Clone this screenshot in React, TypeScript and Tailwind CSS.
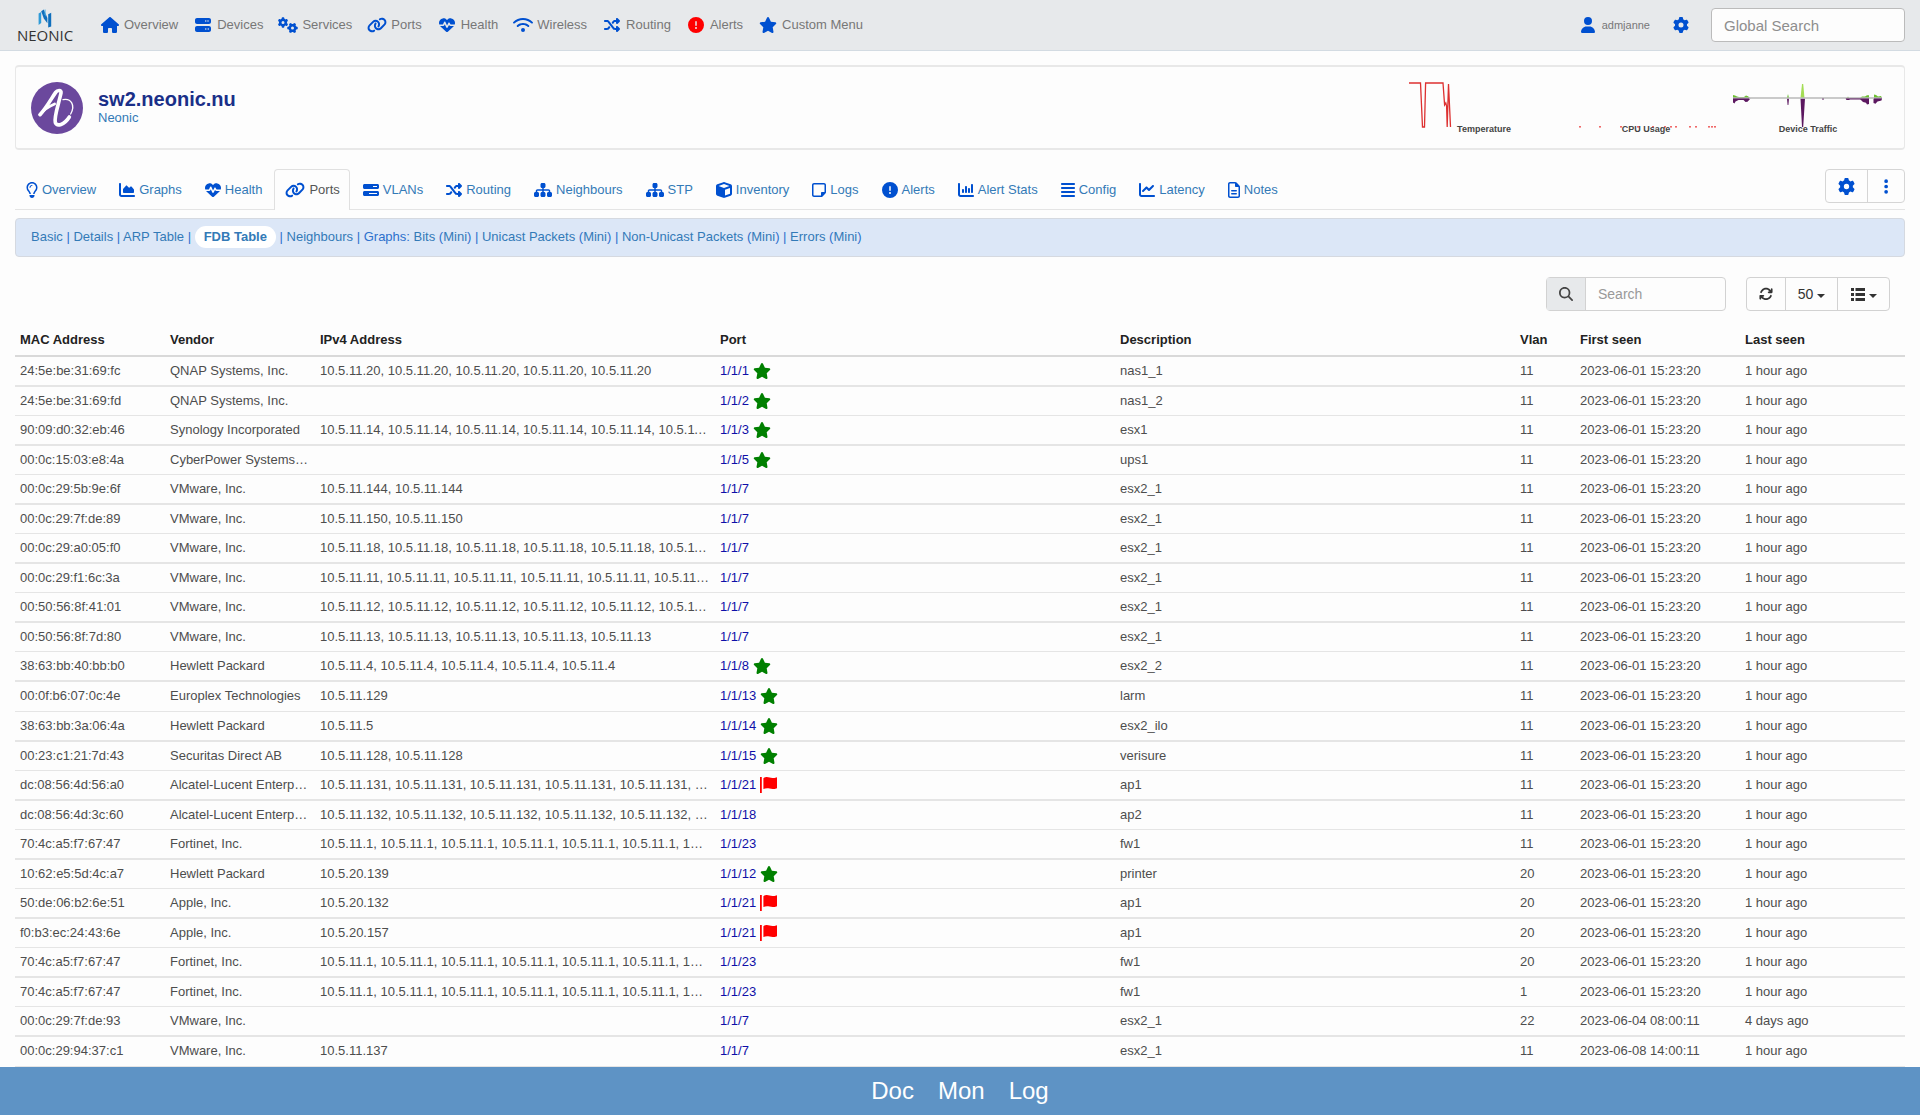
import type { IconType } from "react-icons";
import {
  FaAlignJustify,
  FaArrowsRotate,
  FaBarsProgress,
  FaChartArea,
  FaChartColumn,
  FaChartLine,
  FaCircleExclamation,
  FaCube,
  FaEllipsisVertical,
  FaGear,
  FaGears,
  FaHeartPulse,
  FaHouse,
  FaLink,
  FaMagnifyingGlass,
  FaRegFileLines,
  FaRegLightbulb,
  FaRegNoteSticky,
  FaServer,
  FaShuffle,
  FaSitemap,
  FaStar,
  FaUser,
  FaWifi,
} from "react-icons/fa6";

interface MenuItem {
  label: string;
  icon: IconType;
  color?: string;
}

const mainMenu: MenuItem[] = [
  { label: "Overview", icon: FaHouse },
  { label: "Devices", icon: FaServer },
  { label: "Services", icon: FaGears },
  { label: "Ports", icon: FaLink },
  { label: "Health", icon: FaHeartPulse },
  { label: "Wireless", icon: FaWifi },
  { label: "Routing", icon: FaShuffle },
  { label: "Alerts", icon: FaCircleExclamation, color: "text-[#ff0000]" },
  { label: "Custom Menu", icon: FaStar },
];

const deviceTabs: MenuItem[] = [
  { label: "Overview", icon: FaRegLightbulb },
  { label: "Graphs", icon: FaChartArea },
  { label: "Health", icon: FaHeartPulse },
  { label: "Ports", icon: FaLink },
  { label: "VLANs", icon: FaBarsProgress },
  { label: "Routing", icon: FaShuffle },
  { label: "Neighbours", icon: FaSitemap },
  { label: "STP", icon: FaSitemap },
  { label: "Inventory", icon: FaCube },
  { label: "Logs", icon: FaRegNoteSticky },
  { label: "Alerts", icon: FaCircleExclamation },
  { label: "Alert Stats", icon: FaChartColumn },
  { label: "Config", icon: FaAlignJustify },
  { label: "Latency", icon: FaChartLine },
  { label: "Notes", icon: FaRegFileLines },
];

type Mark = "star" | "flag" | "";

interface FdbEntry {
  mac: string;
  vendor: string;
  ips: string;
  port: string;
  mark: Mark;
  description: string;
  vlan: number;
  first: string;
  last: string;
}

const repeat = (ip: string, times: number) => Array(times).fill(ip).join(", ");

const row = (
  mac: string,
  vendor: string,
  ips: string,
  port: string,
  mark: Mark,
  description: string,
  vlan = 11,
  first = "2023-06-01 15:23:20",
  last = "1 hour ago",
): FdbEntry => ({ mac, vendor, ips, port, mark, description, vlan, first, last });

const entries: FdbEntry[] = [
  row("24:5e:be:31:69:fc", "QNAP Systems, Inc.", repeat("10.5.11.20", 5), "1/1/1", "star", "nas1_1"),
  row("24:5e:be:31:69:fd", "QNAP Systems, Inc.", "", "1/1/2", "star", "nas1_2"),
  row("90:09:d0:32:eb:46", "Synology Incorporated", repeat("10.5.11.14", 6), "1/1/3", "star", "esx1"),
  row("00:0c:15:03:e8:4a", "CyberPower Systems Inc.", "", "1/1/5", "star", "ups1"),
  row("00:0c:29:5b:9e:6f", "VMware, Inc.", repeat("10.5.11.144", 2), "1/1/7", "", "esx2_1"),
  row("00:0c:29:7f:de:89", "VMware, Inc.", repeat("10.5.11.150", 2), "1/1/7", "", "esx2_1"),
  row("00:0c:29:a0:05:f0", "VMware, Inc.", repeat("10.5.11.18", 6), "1/1/7", "", "esx2_1"),
  row("00:0c:29:f1:6c:3a", "VMware, Inc.", repeat("10.5.11.11", 7), "1/1/7", "", "esx2_1"),
  row("00:50:56:8f:41:01", "VMware, Inc.", repeat("10.5.11.12", 6), "1/1/7", "", "esx2_1"),
  row("00:50:56:8f:7d:80", "VMware, Inc.", repeat("10.5.11.13", 5), "1/1/7", "", "esx2_1"),
  row("38:63:bb:40:bb:b0", "Hewlett Packard", repeat("10.5.11.4", 5), "1/1/8", "star", "esx2_2"),
  row("00:0f:b6:07:0c:4e", "Europlex Technologies", "10.5.11.129", "1/1/13", "star", "larm"),
  row("38:63:bb:3a:06:4a", "Hewlett Packard", "10.5.11.5", "1/1/14", "star", "esx2_ilo"),
  row("00:23:c1:21:7d:43", "Securitas Direct AB", repeat("10.5.11.128", 2), "1/1/15", "star", "verisure"),
  row("dc:08:56:4d:56:a0", "Alcatel-Lucent Enterprise", repeat("10.5.11.131", 6), "1/1/21", "flag", "ap1"),
  row("dc:08:56:4d:3c:60", "Alcatel-Lucent Enterprise", repeat("10.5.11.132", 6), "1/1/18", "", "ap2"),
  row("70:4c:a5:f7:67:47", "Fortinet, Inc.", repeat("10.5.11.1", 7), "1/1/23", "", "fw1"),
  row("10:62:e5:5d:4c:a7", "Hewlett Packard", "10.5.20.139", "1/1/12", "star", "printer", 20),
  row("50:de:06:b2:6e:51", "Apple, Inc.", "10.5.20.132", "1/1/21", "flag", "ap1", 20),
  row("f0:b3:ec:24:43:6e", "Apple, Inc.", "10.5.20.157", "1/1/21", "flag", "ap1", 20),
  row("70:4c:a5:f7:67:47", "Fortinet, Inc.", repeat("10.5.11.1", 7), "1/1/23", "", "fw1", 20),
  row("70:4c:a5:f7:67:47", "Fortinet, Inc.", repeat("10.5.11.1", 7), "1/1/23", "", "fw1", 1),
  row("00:0c:29:7f:de:93", "VMware, Inc.", "", "1/1/7", "", "esx2_1", 22, "2023-06-04 08:00:11", "4 days ago"),
  row("00:0c:29:94:37:c1", "VMware, Inc.", "10.5.11.137", "1/1/7", "", "esx2_1", 11, "2023-06-08 14:00:11"),
];

function BrandMark() {
  return (
    <svg viewBox="0 0 14 19" className="h-[19px] w-[14px]" aria-hidden="true">
      <path d="M0.6 4.5 3.2 3v11l-2.6 2z" fill="#2f9bd8" />
      <path d="M3.2 2.2 5.8 0.6 9.4 9v5.2L5.8 9.4z" fill="#0f6fbd" />
      <path d="M6.6 0.6h1v7l-1-2z" fill="#5ab4e4" />
      <path d="M10.2 5.2l3-1.4v13.6l-3 1.2z" fill="#0f6fbd" />
    </svg>
  );
}

function VendorLogo() {
  return (
    <svg viewBox="0 0 156 156" className="size-[52px] shrink-0" aria-hidden="true">
      <circle cx="78" cy="78" r="78" fill="#6b489d" />
      <g fill="none" stroke="#fff" strokeLinecap="round" strokeLinejoin="round">
        <path d="M27 98C46 78 62 48 74 31c5-7 18-8 16 2C84 62 68 106 73 122c5 12 26 8 42-17" strokeWidth="11" />
        <path d="M27 98c8-10 24-24 44-32" strokeWidth="8" />
        <path d="M96 53c24-5 38 16 23 43" strokeWidth="4" />
      </g>
    </svg>
  );
}

function FlagIcon() {
  return (
    <svg viewBox="0 0 17 16" className="h-4 w-[17px] text-[#ff0000]" aria-hidden="true">
      <path d="M0 0h1.8v16H0z" fill="currentColor" />
      <path d="M3.4 1.2C6-.4 7.6 0 9.6.6c2.2.7 4.2.6 7.4-.4v11c-3.2 1.2-5.2 1-7.4.4-2-.5-3.8-.6-6.2.5z" fill="currentColor" />
    </svg>
  );
}

function ListIcon() {
  return (
    <svg viewBox="0 0 14 13" className="h-[13px] w-[14px]" fill="currentColor" aria-hidden="true">
      <path d="M0 0h3v3H0zM0 5h3v3H0zM0 10h3v3H0zM4.5 0H14v3H4.5zM4.5 5H14v3H4.5zM4.5 10H14v3H4.5z" />
    </svg>
  );
}

function Caret() {
  return <span className="mt-1 border-x-4 border-t-4 border-x-transparent border-t-[#333]" />;
}

function TemperatureGraph() {
  return (
    <svg viewBox="0 0 150 46" className="h-[46px] w-[150px]" aria-hidden="true">
      <path
        d="M0 1h11.5l2 44h2L16.6 1H34l1.6 22 1.2-2 .8 3 .6 21L39.5 2l2 43"
        fill="none"
        stroke="#dd3030"
        strokeWidth="1.3"
      />
    </svg>
  );
}

function CpuGraph() {
  const samples = [8, 28, 49, 66, 81, 93, 99, 104, 118, 124, 137, 140, 143];
  return (
    <svg viewBox="0 0 150 46" className="h-[46px] w-[150px]" aria-hidden="true">
      {samples.map((x) => (
        <rect key={x} x={x} y="44" width="2" height="1.6" fill="#f06a6a" />
      ))}
    </svg>
  );
}

function TrafficGraph() {
  return (
    <svg viewBox="0 0 150 46" className="h-[46px] w-[150px]" aria-hidden="true">
      <path d="M0 16v-3l2 .5 2 1 2 .5h5l2-1.5 2 .8 2 1.7zM54 16l1-4 1 4zM114 16l1-1.5 1 1.5zM127 16l2-1.5h3l2-1.3h2V16zM141 16v-3.5l2 .5 2 1.5 3-.5 1 2z" fill="#6cc030" />
      <path d="M67.5 16 69 2h1.2L71.5 16z" fill="#a4dd55" />
      <path d="M0 16.5v4l1.5 1 1-2 3-1.5h5l2 2 2-.3 3-3.2zM54 16.5l.6 6.5h.8l.6-6.5zM67.5 16.5 69 45h1.2L72 16.5zM89 16h2v1.5h-2zM112 16.5l2 1.5h2l1-1h10l3 3 3 .8 1 1.7 2-.5V16.5zM140.5 16.5V21l2 .8 2-2.3 4-1v-2z" fill="#5c1860" />
      <path d="M0 16h149" stroke="#b9b9b9" strokeWidth="1.4" />
      <path d="M0 17h16M113 17h23M141 17h8" stroke="#5c1860" strokeWidth="1" />
    </svg>
  );
}

function TopBar() {
  return (
    <header className="flex h-[51px] items-center border-b border-[#d3dbe2] bg-[#e7e9eb] px-[15px] text-[#777]">
      <a href="#home" className="flex w-[60px] flex-col items-center text-[#333]">
        <BrandMark />
        <span className="font-['Open_Sans',sans-serif] text-[15px] leading-[14px]">NEONIC</span>
      </a>
      <nav className="ml-[25px] flex gap-[15px]">
        {mainMenu.map(({ label, icon: Icon, color }) => (
          <a key={label} href="#menu" className="flex items-center gap-1 whitespace-nowrap">
            <span className="flex w-5 justify-center">
              <Icon size="auto" className={`h-4 w-auto ${color ?? "text-[#0050d0]"}`} />
            </span>
            {label}
          </a>
        ))}
      </nav>
      <a href="#user" className="ml-auto flex items-center gap-[7px] text-[11px]">
        <FaUser size="auto" className="h-4 w-auto text-[#0050d0]" />
        admjanne
      </a>
      <button type="button" aria-label="Settings" className="mr-[22px] ml-[23px] text-[#0050d0]">
        <FaGear className="size-4" />
      </button>
      <input
        type="search"
        aria-label="Global Search"
        placeholder="Global Search"
        className="h-[34px] w-[194px] rounded border border-[#bbb] bg-[#fdfdfd] px-3 text-[15px] placeholder:text-[#8e8e8e]"
      />
    </header>
  );
}

function DeviceHeader() {
  const graphs = [
    { label: "Temperature", graph: <TemperatureGraph /> },
    { label: "CPU Usage", graph: <CpuGraph /> },
    { label: "Device Traffic", graph: <TrafficGraph /> },
  ];
  return (
    <section className="mt-3.5 flex h-[85px] items-center rounded border border-y-2 border-[#e8e8e8] pr-[21px] pl-[15px]">
      <VendorLogo />
      <div className="ml-[15px]">
        <h1 className="text-xl leading-5 font-bold text-[#1a2f88]">
          <a href="#device">sw2.neonic.nu</a>
        </h1>
        <a href="#location" className="block leading-[18px] text-[#337ab7]">
          Neonic
        </a>
      </div>
      <div className="ml-auto flex gap-3 text-center text-[9px] leading-[10px] font-bold text-[#444]">
        {graphs.map(({ label, graph }) => (
          <a key={label} href="#graph" className="flex flex-col items-center">
            {graph}
            <span className="-mt-1">{label}</span>
          </a>
        ))}
      </div>
    </section>
  );
}

function DeviceTabs() {
  return (
    <div className="mt-[19px] flex items-start border-b border-[#e4e4e4]">
      <nav className="-mb-px flex gap-0.5">
        {deviceTabs.map(({ label, icon: Icon }) => (
          <a
            key={label}
            href="#tab"
            className={`flex h-[41px] items-center gap-1 rounded-t border border-b-0 pr-[9px] pl-2.5 whitespace-nowrap ${
              label === "Ports" ? "border-[#e0e0e0] bg-[#fdfdfd] text-[#555]" : "border-transparent text-[#337ab7]"
            }`}
          >
            <Icon size="auto" className="h-4 w-auto text-[#0050d0]" />
            {label}
          </a>
        ))}
      </nav>
      <div className="ml-auto flex h-[34px] divide-x divide-[#d5d5d5] rounded border border-[#d5d5d5] text-[#0050d0]">
        <button type="button" aria-label="Edit device" className="flex w-[42px] items-center justify-center">
          <FaGear className="size-[17px]" />
        </button>
        <button type="button" aria-label="More" className="flex w-9 items-center justify-center">
          <FaEllipsisVertical size="auto" className="h-[17px] w-auto" />
        </button>
      </div>
    </div>
  );
}

function PortViews() {
  const link = "text-[#337ab7]";
  return (
    <nav className="mt-2 h-[39px] rounded border border-[#d5d9e0] bg-[#dce7f7] px-[15px] py-[7px] leading-[22px] whitespace-nowrap text-[#2d70cc]">
      <a href="#basic" className={link}>Basic</a> | <a href="#details" className={link}>Details</a> |{" "}
      <a href="#arp" className={link}>ARP Table</a> |{" "}
      <a href="#fdb" className="inline-block rounded-full bg-white px-[9px] font-bold text-[#337ab7]">FDB Table</a> |{" "}
      <a href="#neighbours" className={link}>Neighbours</a> | Graphs:{" "}
      <a href="#bits" className={link}>Bits</a> (<a href="#bits-mini" className={link}>Mini</a>) |{" "}
      <a href="#unicast" className={link}>Unicast Packets</a> (<a href="#unicast-mini" className={link}>Mini</a>) |{" "}
      <a href="#non-unicast" className={link}>Non-Unicast Packets</a> (<a href="#non-unicast-mini" className={link}>Mini</a>) |{" "}
      <a href="#errors" className={link}>Errors</a> (<a href="#errors-mini" className={link}>Mini</a>)
    </nav>
  );
}

function TableToolbar() {
  return (
    <div className="mt-5 flex h-[34px] justify-end gap-5 pr-[15px] text-sm text-[#333]">
      <div className="flex rounded border border-[#d2d2d2]">
        <label htmlFor="fdb-search" className="flex w-[39px] items-center justify-center border-r border-[#d2d2d2] bg-[#e7e9eb] text-[#444]">
          <FaMagnifyingGlass className="size-3.5" aria-label="Search" />
        </label>
        <input id="fdb-search" type="search" placeholder="Search" className="w-[139px] px-3 placeholder:text-[#999]" />
      </div>
      <div className="flex divide-x divide-[#d2d2d2] rounded border border-[#d2d2d2]">
        <button type="button" aria-label="Refresh" className="flex w-[39px] items-center justify-center">
          <FaArrowsRotate className="size-3.5" />
        </button>
        <button type="button" className="flex w-[52px] items-center justify-center gap-1">
          50
          <Caret />
        </button>
        <button type="button" aria-label="Columns" className="flex w-[51px] items-center justify-center gap-1">
          <ListIcon />
          <Caret />
        </button>
      </div>
    </div>
  );
}

function FdbTable() {
  return (
    <table className="w-full table-fixed border-collapse text-left text-[#4d4d4d] [&_td]:truncate [&_td]:px-[5px] [&_th]:px-[5px]">
      <thead>
        <tr className="h-[45px] border-b-2 border-[#d9d9d9] text-[#222]">
          <th className="w-[150px] pt-3.5">MAC Address</th>
          <th className="w-[150px] pt-3.5">Vendor</th>
          <th className="w-[400px] pt-3.5">IPv4 Address</th>
          <th className="w-[400px] pt-3.5">Port</th>
          <th className="w-[400px] pt-3.5">Description</th>
          <th className="w-[60px] pt-3.5">Vlan</th>
          <th className="w-[165px] pt-3.5">First seen</th>
          <th className="pt-3.5">Last seen</th>
        </tr>
      </thead>
      <tbody>
        {entries.map((e, i) => (
          <tr key={i} className="h-[29px] border-b border-[#e5e5e5] odd:h-[30px] odd:border-b-2 nth-[12n]:h-[30px]">
            <td>{e.mac}</td>
            <td>{e.vendor}</td>
            <td>{e.ips}</td>
            <td>
              <a href="#port" className="flex items-center gap-1 text-[#0f0fa8]">
                {e.port}
                {e.mark === "star" && <FaStar size="auto" className="h-4 w-auto text-[#008000]" />}
                {e.mark === "flag" && <FlagIcon />}
              </a>
            </td>
            <td>{e.description}</td>
            <td>{e.vlan}</td>
            <td>{e.first}</td>
            <td>{e.last}</td>
          </tr>
        ))}
      </tbody>
    </table>
  );
}

export default function App() {
  return (
    <div className="flex min-h-screen flex-col bg-[#fdfdfd] font-['Liberation_Sans',Arial,sans-serif] text-[13px] leading-[18px]">
      <TopBar />
      <main className="px-[15px]">
        <DeviceHeader />
        <DeviceTabs />
        <PortViews />
        <TableToolbar />
        <FdbTable />
      </main>
      <footer className="sticky bottom-0 mt-auto flex h-12 items-center justify-center gap-6 bg-[#5e93c5] text-2xl text-white">
        <a href="#doc">Doc</a>
        <a href="#mon">Mon</a>
        <a href="#log">Log</a>
      </footer>
    </div>
  );
}
